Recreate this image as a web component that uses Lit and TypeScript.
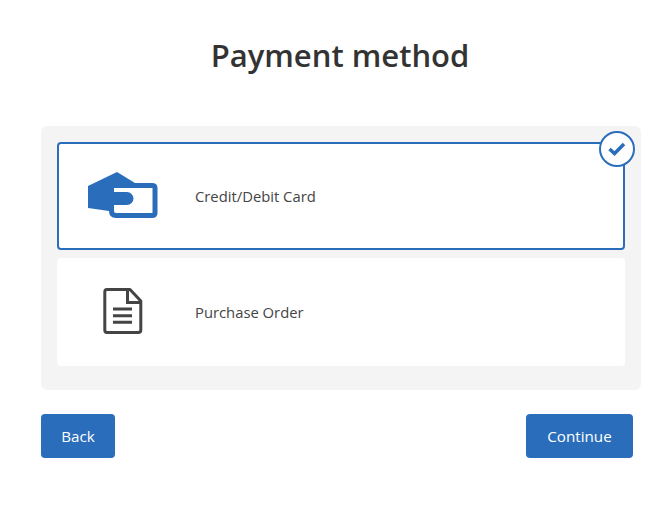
import { LitElement, css, html, svg } from "lit";
import { customElement } from "lit/decorators.js";

const cardIcon = svg`<svg class="icon" width="72" height="48" viewBox="0 0 72 48">
  <path fill="#2a6ebb" d="M1 14 L30 0 L48 11 H65 Q70.500 11 70.500 16 V41 Q70.500 46 65 46 H29 Q22 46 22 39 L1 36 Z"/>
  <path fill="#fff" d="M27 16 H65.500 V41 H29 Q27 41 27 39 V33 H40 A6.500 6.500 0 0 0 40 20 H27 Z"/>
</svg>`;

const docIcon = svg`<svg class="icon" width="72" height="48" viewBox="0 0 72 48" fill="none" stroke="#444" stroke-width="3">
  <path d="M20 1.500 H43 L53.800 13 V42 Q53.800 44.500 51.300 44.500 H20 Q17.800 44.500 17.800 42 V4 Q17.800 1.500 20 1.500 Z" stroke-linejoin="round"/>
  <path d="M40.500 2 V14.500 H53"/>
  <path d="M26 21 H45 M26 27.700 H45 M26 34.300 H45"/>
</svg>`;

@customElement("app-root")
export class AppRoot extends LitElement {
  static styles = css`
    :host {
      display: block;
      height: 507px;
      background: #fff;
      font-family: "Open Sans", "Noto Sans", sans-serif;
      color: #444;
    }
    h1 {
      margin: 0;
      padding: 33px 0 0 11px;
      height: 126px;
      box-sizing: border-box;
      text-align: center;
      font-size: 31px;
      line-height: 44px;
      font-weight: 600;
      color: #333;
    }
    .wrap {
      padding: 0 28px 0 41px;
    }
    .panel {
      display: flex;
      flex-direction: column;
      gap: 8px;
      padding: 16px 16px 24px;
      background: #f4f4f4;
      border-radius: 6px;
    }
    .option {
      position: relative;
      display: flex;
      align-items: center;
      height: 108px;
      box-sizing: border-box;
      padding-left: 30px;
      background: #fff;
      border-radius: 4px;
      font-size: 14.800px;
    }
    .option.selected {
      border: 2px solid #2a6ebb;
      padding-left: 28px;
    }
    .option span {
      margin-left: 36px;
    }
    .icon {
      flex: none;
    }
    .check {
      position: absolute;
      top: -13px;
      right: -12px;
      width: 36px;
      height: 36px;
      box-sizing: border-box;
      border: 2px solid #2a6ebb;
      border-radius: 50%;
      background: #fff;
      display: flex;
      align-items: center;
      justify-content: center;
    }
    .actions {
      display: flex;
      justify-content: space-between;
      margin-top: 24px;
      padding-right: 8px;
    }
    button {
      height: 44px;
      border: 0;
      border-radius: 4px;
      background: #2a6ebb;
      color: #fff;
      font: inherit;
      font-size: 15.200px;
    }
    .back {
      width: 74px;
    }
    .continue {
      width: 107px;
    }
  `;

  render() {
    return html`
      <h1>Payment method</h1>
      <div class="wrap">
        <div class="panel">
          <div class="option selected">
            ${cardIcon}
            <span>Credit/Debit Card</span>
            <div class="check">
              <svg width="18" height="14" viewBox="0 0 18 14" fill="none" stroke="#2a6ebb" stroke-width="3.500">
                <path d="M1.500 7 L6.500 11.500 L16 2"/>
              </svg>
            </div>
          </div>
          <div class="option">
            ${docIcon}
            <span>Purchase Order</span>
          </div>
        </div>
        <div class="actions">
          <button class="back">Back</button>
          <button class="continue">Continue</button>
        </div>
      </div>
    `;
  }
}
